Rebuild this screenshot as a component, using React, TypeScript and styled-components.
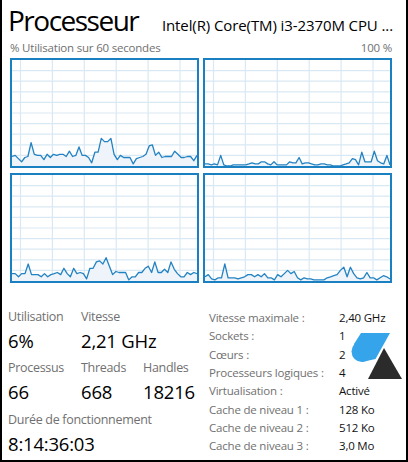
import React from "react";
import styled, { createGlobalStyle } from "styled-components";

const GlobalStyle = createGlobalStyle`
  html, body { margin: 0; padding: 0; background: #fff; }
  body { font-family: "Open Sans", "Noto Sans", sans-serif; color: #000; }
`;

const Window = styled.div`
  position: relative;
  width: 408px;
  height: 462px;
  box-sizing: border-box;
  border: 2px solid #000;
  border-top: none;
  background: #fff;
  overflow: hidden;
  padding-left: 6px;
`;

const Header = styled.div`
  display: flex;
  justify-content: space-between;
  align-items: baseline;
  width: 385px;
  padding-top: 4px;
`;

const Title = styled.div`
  font-size: 28px;
  line-height: 32px;
  letter-spacing: -1.5px;
  color: #000;
`;

const CpuName = styled.div`
  font-size: 15px;
  line-height: 18px;
  letter-spacing: -0.1px;
  color: #000;
`;

const SubHeader = styled.div`
  display: flex;
  justify-content: space-between;
  margin: 5px 0 0 2px;
  width: 382px;
  font-size: 11.5px;
  line-height: 14px;
  color: #707070;
  letter-spacing: -0.2px;
`;

const GraphGrid = styled.div`
  display: grid;
  grid-template-columns: 189px 189px;
  grid-auto-rows: 110px;
  column-gap: 4px;
  row-gap: 5px;
  margin: 3px 0 0 2px;
`;

const GraphFrame = styled.div`
  box-sizing: border-box;
  border: 2px solid #1b80c2;
  background: #fff;
  svg { display: block; }
`;

const Stats = styled.div`
  display: grid;
  grid-template-columns: 201px auto;
  margin-top: 26px;
`;

const LeftStats = styled.div`
  display: grid;
  grid-template-columns: 73px 62px auto;
  row-gap: 7.4px;
  align-content: start;
`;

const StatBlock = styled.div<{ $span?: number }>`
  display: flex;
  flex-direction: column;
  gap: 4px;
  grid-column: span ${(p) => p.$span ?? 1};
`;

const StatLabel = styled.div`
  font-size: 12.5px;
  line-height: 16px;
  color: #707070;
  letter-spacing: -0.3px;
  white-space: nowrap;
`;

const StatValue = styled.div`
  font-size: 18.5px;
  line-height: 24px;
  color: #000;
  letter-spacing: -0.2px;
  white-space: nowrap;
`;

const DetailTable = styled.div`
  display: grid;
  grid-template-columns: 130px auto;
  font-size: 11.5px;
  line-height: 17.85px;
  letter-spacing: -0.2px;
  white-space: nowrap;
`;

const DetailLabel = styled.div`
  color: #707070;
`;

const DetailValue = styled.div`
  color: #111;
`;

const Watermark = styled.svg`
  position: absolute;
  left: 343px;
  top: 325px;
  width: 60px;
  height: 60px;
  display: block;
`;

const W = 185;
const H = 106;

const Graph = ({ data }: { data: number[] }) => {
  const pts = data.map((v, i) => [
    (i * W) / (data.length - 1),
    H - (v / 100) * H,
  ]);
  const line = pts.map(([x, y]) => `${x.toFixed(1)},${y.toFixed(1)}`).join(" ");
  const area = `0,${H} ${line} ${W},${H}`;
  const vLines = [8.5, 40.4, 72.3, 104.2, 136.1, 168];
  const hLines = Array.from({ length: 9 }, (_, j) => ((j + 1) * H) / 10);
  return (
    <GraphFrame>
      <svg width={W} height={H} viewBox={`0 0 ${W} ${H}`}>
        {vLines.map((x) => (
          <line key={`v${x}`} x1={x} x2={x} y1={0} y2={H} stroke="#d9e9f3" strokeWidth={1.2} />
        ))}
        {hLines.map((y) => (
          <line key={`h${y}`} x1={0} x2={W} y1={y} y2={y} stroke="#d9e9f3" strokeWidth={1.2} />
        ))}
        <polygon points={area} fill="#eef4f9" />
        <polyline points={line} fill="none" stroke="#2382c2" strokeWidth={1.3} strokeLinejoin="round" />
      </svg>
    </GraphFrame>
  );
};

const g1 = [9, 10, 7, 4, 8, 9, 22, 11, 10, 10, 6, 11, 8, 11, 10, 11, 11, 9, 14, 9, 10, 18, 10, 10, 8, 3, 13, 13, 26, 23, 23, 26, 11, 6, 10, 8, 8, 8, 2, 7, 8, 9, 11, 19, 20, 10, 13, 8, 9, 9, 9, 14, 11, 8, 8, 9, 9, 5, 10];
const g2 = [2, 2, 1, 2, 1, 10, 1, 0, 0, 1, 1, 1, 1, 1, 2, 3, 2, 2, 4, 4, 2, 1, 4, 1, 1, 1, 1, 4, 3, 3, 8, 2, 3, 3, 2, 1, 1, 2, 2, 1, 1, 0, 0, 0, 1, 2, 3, 7, 6, 1, 13, 4, 4, 4, 14, 5, 3, 2, 10, 1];
const g3 = [7, 7, 4, 7, 7, 16, 6, 6, 6, 4, 7, 4, 6, 7, 8, 6, 12, 7, 4, 12, 7, 8, 7, 2, 12, 12, 18, 19, 16, 22, 14, 6, 9, 8, 8, 8, 1, 4, 4, 8, 8, 12, 14, 8, 18, 8, 8, 11, 8, 18, 11, 7, 4, 4, 8, 6, 8, 7];
const g4 = [4, 6, 2, 1, 3, 3, 16, 3, 3, 3, 2, 3, 4, 6, 6, 4, 6, 4, 7, 3, 3, 1, 6, 4, 7, 10, 7, 9, 3, 1, 3, 2, 2, 1, 1, 1, 1, 3, 4, 5, 6, 10, 13, 4, 13, 7, 3, 2, 3, 8, 3, 3, 1, 3, 5, 4, 2];

const details: [string, string][] = [
  ["Vitesse maximale :", "2,40 GHz"],
  ["Sockets :", "1"],
  ["Cœurs :", "2"],
  ["Processeurs logiques :", "4"],
  ["Virtualisation :", "Activé"],
  ["Cache de niveau 1 :", "128 Ko"],
  ["Cache de niveau 2 :", "512 Ko"],
  ["Cache de niveau 3 :", "3,0 Mo"],
];

const Stat = ({ label, value, span }: { label: string; value: string; span?: number }) => (
  <StatBlock $span={span}>
    <StatLabel>{label}</StatLabel>
    <StatValue>{value}</StatValue>
  </StatBlock>
);

export default function App() {
  return (
    <>
      <GlobalStyle />
      <Window>
        <Header>
          <Title>Processeur</Title>
          <CpuName>Intel(R) Core(TM) i3-2370M CPU ...</CpuName>
        </Header>
        <SubHeader>
          <span>% Utilisation sur 60 secondes</span>
          <span>100 %</span>
        </SubHeader>
        <GraphGrid>
          <Graph data={g1} />
          <Graph data={g2} />
          <Graph data={g3} />
          <Graph data={g4} />
        </GraphGrid>
        <Stats>
          <LeftStats>
            <Stat label="Utilisation" value="6%" />
            <Stat label="Vitesse" value="2,21 GHz" span={2} />
            <Stat label="Processus" value="66" />
            <Stat label="Threads" value="668" />
            <Stat label="Handles" value="18216" />
            <Stat label="Durée de fonctionnement" value="8:14:36:03" span={3} />
          </LeftStats>
          <DetailTable>
            {details.map(([k, v]) => (
              <React.Fragment key={k}>
                <DetailLabel>{k}</DetailLabel>
                <DetailValue>{v}</DetailValue>
              </React.Fragment>
            ))}
          </DetailTable>
        </Stats>
        <Watermark width="60" height="60" viewBox="0 0 60 60">
          <circle cx="17" cy="26.5" r="10.5" fill="#35a4ea" />
          <polygon points="16,8 45,8 30.5,34 17,37 9,19" fill="#35a4ea" />
          <polygon points="39,23 23,54 57,54" fill="#2b2b2b" />
        </Watermark>
      </Window>
    </>
  );
}
